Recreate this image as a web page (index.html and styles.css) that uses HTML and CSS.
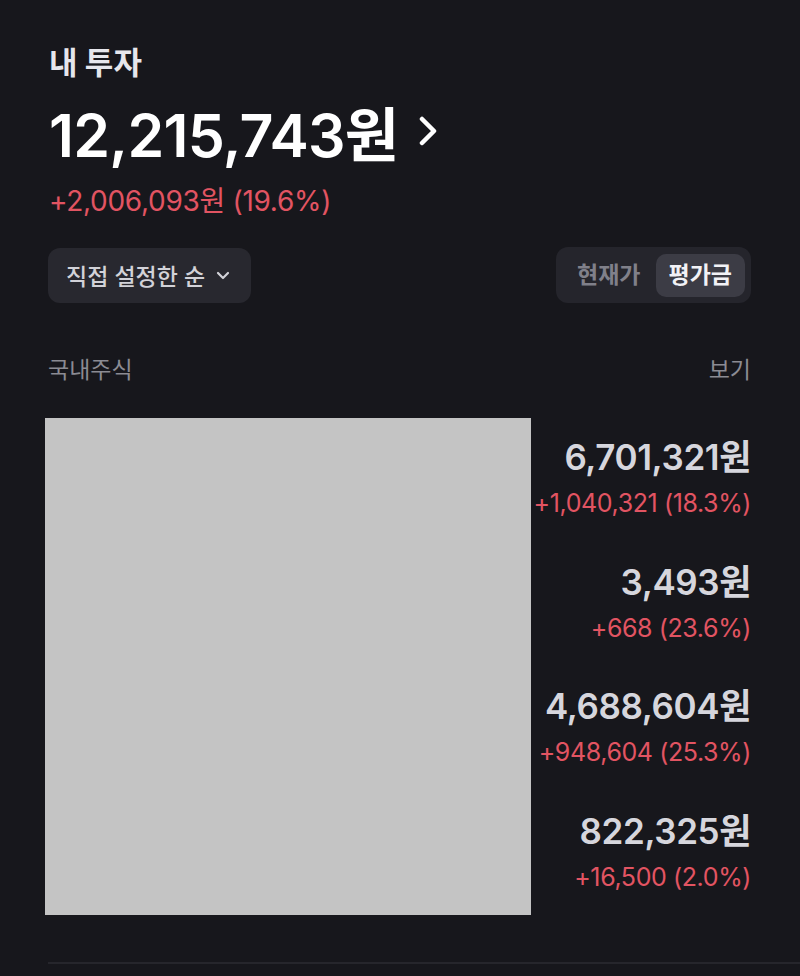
FILE: index.html
```html
<!DOCTYPE html>
<html lang="ko">
<head>
    <meta charset="UTF-8">
    <meta name="viewport" content="width=device-width, initial-scale=1.0">
    <title>내 투자</title>
    <link rel="stylesheet" href="styles.css">
</head>
<body>
    <div class="container">
        <h1 class="title">내 투자</h1>

        <div class="total">
            <span class="total-amount">12,215,743원</span>
            <svg class="total-arrow" width="18" height="30" viewBox="0 0 18 30">
                <path d="M3 3 L15 15 L3 27" fill="none" stroke="#ffffff" stroke-width="4.5" stroke-linecap="round" stroke-linejoin="round"/>
            </svg>
        </div>
        <div class="total-profit">+2,006,093원 (19.6%)</div>

        <div class="controls">
            <button class="sort-button">
                직접 설정한 순
                <svg width="14" height="9" viewBox="0 0 14 9">
                    <path d="M2 2 L7 7 L12 2" fill="none" stroke="#d2d2d8" stroke-width="2.2" stroke-linecap="round" stroke-linejoin="round"/>
                </svg>
            </button>
            <div class="toggle">
                <span class="toggle-item">현재가</span>
                <span class="toggle-item active">평가금</span>
            </div>
        </div>

        <div class="section-header">
            <span class="section-title">국내주식</span>
            <span class="section-link">보기</span>
        </div>

        <div class="holdings">
            <div class="holding">
                <div class="holding-value">6,701,321원</div>
                <div class="holding-profit">+1,040,321 (18.3%)</div>
            </div>
            <div class="holding">
                <div class="holding-value">3,493원</div>
                <div class="holding-profit">+668 (23.6%)</div>
            </div>
            <div class="holding">
                <div class="holding-value">4,688,604원</div>
                <div class="holding-profit">+948,604 (25.3%)</div>
            </div>
            <div class="holding">
                <div class="holding-value">822,325원</div>
                <div class="holding-profit">+16,500 (2.0%)</div>
            </div>
            <div class="redacted"></div>
        </div>

        <div class="divider"></div>
    </div>
</body>
</html>
```

FILE: styles.css
```css
:root {
    --bg-color: #17171c;
    --text-color: #e6e6ec;
    --muted: #8b8b93;
    --red: #e25462;
    --chip-bg: #28282f;
    --chip-active: #3c3c45;
}

body {
    margin: 0;
    background-color: var(--bg-color);
    color: var(--text-color);
    font-family: "Inter", "Noto Sans CJK KR", sans-serif;
}

.container {
    width: 800px;
    height: 976px;
    overflow: hidden;
    padding: 43px 49px 0 48px;
    box-sizing: border-box;
}

.title {
    margin: 0 0 0 1px;
    font-size: 31px;
    font-weight: 700;
    line-height: 40px;
    color: #e6e6ec;
}

.total {
    display: flex;
    align-items: center;
    margin-top: 12px;
    margin-left: 1px;
    height: 72px;
}

.total-amount {
    font-size: 59px;
    font-weight: 600;
    color: #ffffff;
    letter-spacing: -0.7px;
}

.total-arrow {
    margin-left: 21px;
}

.total-profit {
    margin-top: 15px;
    margin-left: 1px;
    font-size: 28px;
    line-height: 38px;
    color: var(--red);
    letter-spacing: -0.3px;
}

.controls {
    display: flex;
    justify-content: space-between;
    align-items: center;
    margin-top: 27px;
}

.sort-button {
    display: flex;
    align-items: center;
    gap: 11px;
    height: 55px;
    padding: 0 21px 0 18px;
    border: none;
    border-radius: 12px;
    background-color: var(--chip-bg);
    color: #d2d2d8;
    font-family: inherit;
    font-size: 23px;
    font-weight: 500;
}

.toggle {
    display: flex;
    align-items: center;
    height: 56px;
    padding: 0 6px 0 8px;
    border-radius: 12px;
    background-color: #25252c;
    box-sizing: border-box;
}

.toggle-item {
    padding: 0 13px;
    height: 43px;
    line-height: 43px;
    font-size: 23px;
    font-weight: 600;
    color: #80808a;
    border-radius: 10px;
}

.toggle-item.active {
    margin-left: 2px;
    background-color: var(--chip-active);
    color: #f2f2f6;
    font-weight: 700;
}

.section-header {
    display: flex;
    justify-content: space-between;
    margin-top: 51px;
    font-size: 23px;
    line-height: 32px;
    color: var(--muted);
}

.holdings {
    position: relative;
    margin-top: 50px;
    text-align: right;
}

.holding {
    height: 124.5px;
}

.holding-value {
    font-size: 35px;
    font-weight: 600;
    line-height: 42px;
    color: #d6d6dd;
    letter-spacing: -0.4px;
}

.holding-profit {
    margin-top: 10px;
    font-size: 25px;
    line-height: 30px;
    color: var(--red);
    letter-spacing: -0.4px;
}

/* 종목명 가림 */
.redacted {
    position: absolute;
    top: -18px;
    left: -3px;
    width: 486px;
    height: 497px;
    background-color: #c4c4c4;
}

.divider {
    margin-top: 28px;
    margin-right: -49px;
    height: 2px;
    background-color: #26262c;
}
```
